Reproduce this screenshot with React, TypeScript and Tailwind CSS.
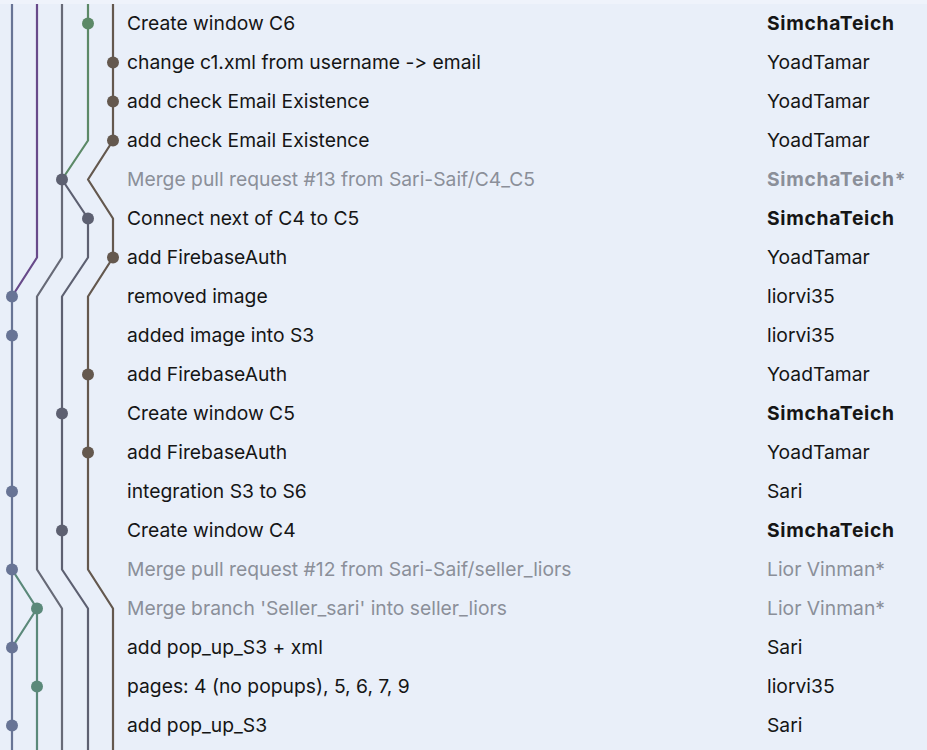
import React from 'react';

type Commit = {
  message: string;
  author: string;
  merge?: boolean;
  bold?: boolean;
};

const commits: Commit[] = [
  { message: 'Create window C6', author: 'SimchaTeich', bold: true },
  { message: 'change c1.xml from username -> email', author: 'YoadTamar' },
  { message: 'add check Email Existence', author: 'YoadTamar' },
  { message: 'add check Email Existence', author: 'YoadTamar' },
  { message: 'Merge pull request #13 from Sari-Saif/C4_C5', author: 'SimchaTeich*', merge: true, bold: true },
  { message: 'Connect next of C4 to C5', author: 'SimchaTeich', bold: true },
  { message: 'add FirebaseAuth', author: 'YoadTamar' },
  { message: 'removed image', author: 'liorvi35' },
  { message: 'added image into S3', author: 'liorvi35' },
  { message: 'add FirebaseAuth', author: 'YoadTamar' },
  { message: 'Create window C5', author: 'SimchaTeich', bold: true },
  { message: 'add FirebaseAuth', author: 'YoadTamar' },
  { message: 'integration S3 to S6', author: 'Sari' },
  { message: 'Create window C4', author: 'SimchaTeich', bold: true },
  { message: 'Merge pull request #12 from Sari-Saif/seller_liors', author: 'Lior Vinman*', merge: true },
  { message: "Merge branch 'Seller_sari' into seller_liors", author: 'Lior Vinman*', merge: true },
  { message: 'add pop_up_S3 + xml', author: 'Sari' },
  { message: 'pages: 4 (no popups), 5, 6, 7, 9', author: 'liorvi35' },
  { message: 'add pop_up_S3', author: 'Sari' },
];

const ROW = 39;
const H = 746;
const lane = [12, 37, 62, 88, 113];
const ry = (i: number) => 19.5 + ROW * i;

const colors = {
  blue: '#687495',
  purple: '#684a8a',
  grayA: '#676a77',
  grayB: '#5d6071',
  green: '#5c8967',
  brown: '#64584e',
  teal: '#5b897a',
};

// each branch is a polyline of [lane, row] points; row -1 = top edge, 99 = bottom edge
const branches: { color: string; pts: [number, number][] }[] = [
  { color: colors.blue, pts: [[0, -1], [0, 99]] },
  { color: colors.purple, pts: [[1, -1], [1, 6], [0, 7]] },
  { color: colors.grayA, pts: [[2, -1], [2, 6], [1, 7], [1, 14], [2, 15], [2, 99]] },
  { color: colors.green, pts: [[3, -1], [3, 3], [2, 4]] },
  { color: colors.grayB, pts: [[2, 4], [3, 5], [3, 6], [2, 7], [2, 14], [3, 15], [3, 99]] },
  { color: colors.brown, pts: [[4, -1], [4, 3], [3, 4], [4, 5], [4, 6], [3, 7], [3, 14], [4, 15], [4, 99]] },
  { color: colors.teal, pts: [[0, 14], [1, 15], [0, 16]] },
  { color: colors.teal, pts: [[1, 15], [1, 99]] },
];

const dots: { lane: number; row: number; color: string }[] = [
  { lane: 3, row: 0, color: colors.green },
  { lane: 4, row: 1, color: colors.brown },
  { lane: 4, row: 2, color: colors.brown },
  { lane: 4, row: 3, color: colors.brown },
  { lane: 2, row: 4, color: colors.grayB },
  { lane: 3, row: 5, color: colors.grayB },
  { lane: 4, row: 6, color: colors.brown },
  { lane: 0, row: 7, color: colors.blue },
  { lane: 0, row: 8, color: colors.blue },
  { lane: 3, row: 9, color: colors.brown },
  { lane: 2, row: 10, color: colors.grayB },
  { lane: 3, row: 11, color: colors.brown },
  { lane: 0, row: 12, color: colors.blue },
  { lane: 2, row: 13, color: colors.grayB },
  { lane: 0, row: 14, color: colors.blue },
  { lane: 1, row: 15, color: colors.teal },
  { lane: 0, row: 16, color: colors.blue },
  { lane: 1, row: 17, color: colors.teal },
  { lane: 0, row: 18, color: colors.blue },
];

const toY = (r: number) => (r === -1 ? 0 : r === 99 ? H : ry(r));

const Graph: React.FC = () => (
  <svg width={127} height={H} className="shrink-0 block">
    {branches.map((b, i) => (
      <polyline
        key={i}
        points={b.pts.map(([l, r]) => `${lane[l]},${toY(r)}`).join(' ')}
        fill="none"
        stroke={b.color}
        strokeWidth={2.2}
        strokeLinejoin="round"
      />
    ))}
    {dots.map((d, i) => (
      <circle key={i} cx={lane[d.lane]} cy={ry(d.row)} r={6} fill={d.color} />
    ))}
  </svg>
);

export default function App() {
  return (
    <div
      className="w-[927px] h-[750px] overflow-hidden bg-[#e9eff9] flex flex-col"
      style={{ fontFamily: 'Inter, "Noto Sans", sans-serif', fontVariantLigatures: 'none', fontFeatureSettings: '"calt" 0' }}
    >
      <div className="h-[4px] shrink-0 bg-[#eff3fb]" />
      <div className="flex">
        <Graph />
        <div className="flex flex-col flex-1">
          {commits.map((c, i) => (
            <div key={i} className="h-[39px] shrink-0 flex items-center text-[19.3px] leading-none">
              <div className={`w-[640px] whitespace-nowrap ${c.merge ? 'text-[#8b8f99]' : 'text-[#151515]'}`}>
                {c.message}
              </div>
              <div
                className={`whitespace-nowrap ${c.merge ? 'text-[#8b8f99]' : 'text-[#151515]'} ${
                  c.bold ? 'font-bold tracking-[0.7px]' : 'font-normal'
                }`}
              >
                {c.author}
              </div>
            </div>
          ))}
        </div>
      </div>
    </div>
  );
}
